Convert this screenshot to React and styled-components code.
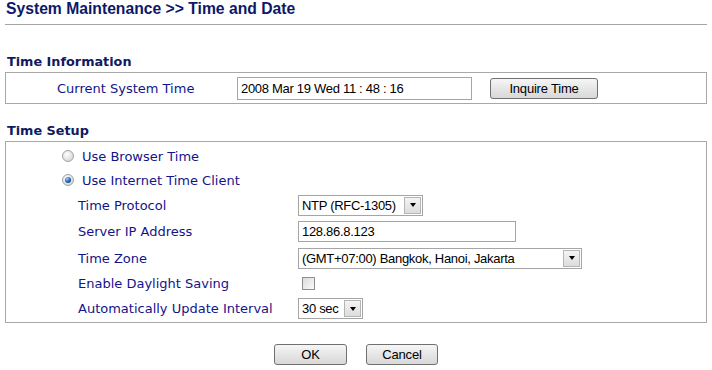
import React from "react"
import styled, { createGlobalStyle } from "styled-components"

const GlobalStyle = createGlobalStyle`
  body {
    margin: 0;
    background: #fff;
    font-family: "DejaVu Sans", Verdana, sans-serif;
  }
`

const Page = styled.div`
  width: 702px;
  padding: 0 5px;
`

const Title = styled.h1`
  margin: 0;
  font: bold 15.7px/17px "Liberation Sans", Arial, sans-serif;
  color: #0d1868;
  padding-left: 1px;
`

const Rule = styled.div`
  margin-top: 7px;
  border-top: 1px solid #a5a5a5;
`

const Heading = styled.h2`
  margin: ${p => p.$top}px 0 2px;
  padding-left: 2px;
  font: bold 12.8px/16px "DejaVu Sans", Verdana, sans-serif;
  color: #0f1a60;
`

const Box = styled.div`
  border: 1px solid #a8a8a8;
  box-sizing: border-box;
  padding: ${p => p.$pad || "0"};
`

const InfoRow = styled.div`
  display: flex;
  align-items: center;
  height: 30px;
`

const Label = styled.span`
  width: ${p => p.$w}px;
  padding-left: ${p => p.$indent}px;
  box-sizing: border-box;
  flex-shrink: 0;
  font-size: 13px;
  color: #14148a;
  white-space: nowrap;
`

const TextBox = styled.div`
  width: ${p => p.$w}px;
  height: ${p => p.$h || 21}px;
  box-sizing: border-box;
  border: 1px solid #a5a5a5;
  background: #fff;
  display: flex;
  align-items: center;
  padding-left: 3px;
  font: 13px "Liberation Sans", Arial, sans-serif;
  letter-spacing: -0.3px;
  color: #000;
`

const Button = styled.button`
  width: ${p => p.$w}px;
  height: 21px;
  margin-left: ${p => p.$ml || 0}px;
  border: 1px solid #707070;
  border-radius: 3px;
  background: linear-gradient(#f6f6f6, #e6e6e6 50%, #d8d8d8);
  font: 13px "Liberation Sans", Arial, sans-serif;
  letter-spacing: -0.2px;
  color: #000;
  padding: 0;
`

const SetupRow = styled.div`
  display: flex;
  align-items: center;
  height: ${p => p.$h}px;
`

const RadioMark = styled.span`
  width: 12px;
  height: 12px;
  margin-left: 56px;
  margin-right: 8px;
  border-radius: 50%;
  box-sizing: border-box;
  border: 1px solid #a2a2a2;
  background: radial-gradient(circle at 40% 35%, #ffffff, #d6d6d6 80%);
  display: flex;
  align-items: center;
  justify-content: center;
  &::after {
    content: "";
    display: ${p => (p.$checked ? "block" : "none")};
    width: 6px;
    height: 6px;
    border-radius: 50%;
    background: radial-gradient(circle at 35% 30%, #9fd0ff, #1a5fb0 55%, #0a2c6a);
  }
`

const Select = styled.div`
  width: ${p => p.$w}px;
  height: 21px;
  box-sizing: border-box;
  border: 1px solid #a5a5a5;
  background: #fff;
  display: flex;
  align-items: center;
  padding: 1px;
  font: 13px "Liberation Sans", Arial, sans-serif;
  letter-spacing: -0.3px;
  color: #000;
`

const SelectValue = styled.span`
  flex: 1;
  padding-left: 2px;
  white-space: nowrap;
  overflow: hidden;
`

const Arrow = styled.span`
  width: 17px;
  height: 17px;
  box-sizing: border-box;
  border: 1px solid #b5b5b5;
  background: linear-gradient(#f4f4f4, #dcdcdc);
  display: flex;
  align-items: center;
  justify-content: center;
  &::after {
    content: "";
    border-left: 3.5px solid transparent;
    border-right: 3.5px solid transparent;
    border-top: 4px solid #000;
  }
`

const Check = styled.span`
  width: 13px;
  height: 13px;
  margin-left: 4px;
  box-sizing: border-box;
  border: 1px solid #8e8e8e;
  background: linear-gradient(135deg, #dcdcdc, #fafafa);
`

const Actions = styled.div`
  display: flex;
  justify-content: center;
  gap: 19px;
  margin-top: 21px;
`

const Dropdown = ({ w, value }) => (
  <Select $w={w}>
    <SelectValue>{value}</SelectValue>
    <Arrow />
  </Select>
)

const Field = ({ label, h, children }) => (
  <SetupRow $h={h}>
    <Label $w={292} $indent={72}>{label}</Label>
    {children}
  </SetupRow>
)

export default function App() {
  return (
    <Page>
      <GlobalStyle />
      <Title>System Maintenance &gt;&gt; Time and Date</Title>
      <Rule />

      <Heading $top={29}>Time Information</Heading>
      <Box>
        <InfoRow>
          <Label $w={231} $indent={51}>Current System Time</Label>
          <TextBox $w={235} $h={23}>2008 Mar 19 Wed 11 : 48 : 16</TextBox>
          <Button $w={108} $ml={18}>Inquire Time</Button>
        </InfoRow>
      </Box>

      <Heading $top={19}>Time Setup</Heading>
      <Box $pad="2px 0 1px">
        <SetupRow $h={24}>
          <RadioMark />
          <Label>Use Browser Time</Label>
        </SetupRow>
        <SetupRow $h={24}>
          <RadioMark $checked />
          <Label>Use Internet Time Client</Label>
        </SetupRow>
        <Field label="Time Protocol" h={26}>
          <Dropdown w={125} value="NTP (RFC-1305)" />
        </Field>
        <Field label="Server IP Address" h={27}>
          <TextBox $w={218}>128.86.8.123</TextBox>
        </Field>
        <Field label="Time Zone" h={26}>
          <Dropdown w={284} value="(GMT+07:00) Bangkok, Hanoi, Jakarta" />
        </Field>
        <Field label="Enable Daylight Saving" h={25}>
          <Check />
        </Field>
        <Field label="Automatically Update Interval" h={25}>
          <Dropdown w={65} value="30 sec" />
        </Field>
      </Box>

      <Actions>
        <Button $w={73}>OK</Button>
        <Button $w={72}>Cancel</Button>
      </Actions>
    </Page>
  )
}
